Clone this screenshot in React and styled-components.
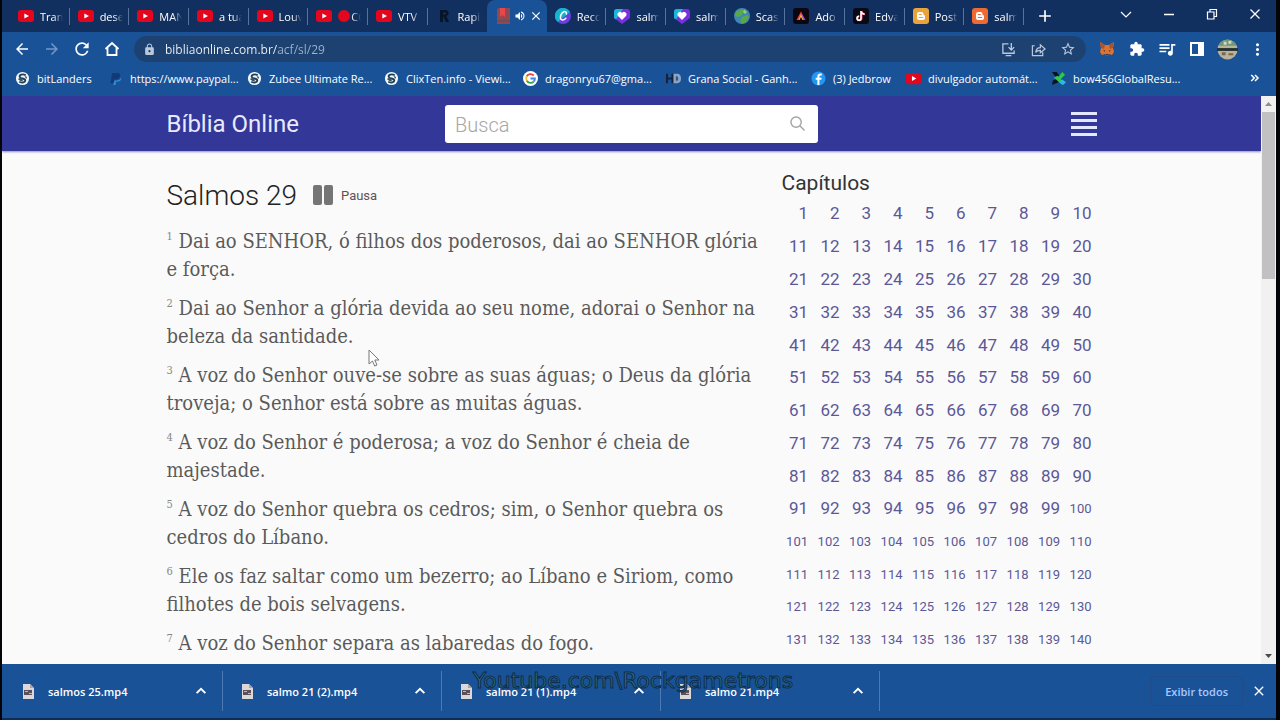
import React from 'react';
import styled, { createGlobalStyle } from 'styled-components';
import {
    MdArrowBack, MdArrowForward, MdRefresh, MdLock, MdStarBorder, MdExtension,
    MdQueueMusic, MdMoreVert, MdVolumeUp, MdClose, MdAdd
} from 'react-icons/md';

const UI_FONT = '"Open Sans", "Noto Sans", sans-serif';
const PAGE_FONT = 'Roboto, "Liberation Sans", sans-serif';

const TABS = [
    { icon: 'youtube', label: 'Trans' },
    { icon: 'youtube', label: 'deser' },
    { icon: 'youtube', label: 'MANH' },
    { icon: 'youtube', label: 'a tua' },
    { icon: 'youtube', label: 'Louvo' },
    { icon: 'youtube', label: 'CO', live: true },
    { icon: 'youtube', label: 'VTV' },
    { icon: 'rapid', label: 'Rapid' },
    { icon: 'bible', active: true },
    { icon: 'canva', label: 'Reco' },
    { icon: 'heart', label: 'salmo' },
    { icon: 'heart', label: 'salmo' },
    { icon: 'globe', label: 'Scas' },
    { icon: 'adobe', label: 'Ado' },
    { icon: 'tiktok', label: 'Edva' },
    { icon: 'bloggerYellow', label: 'Post' },
    { icon: 'blogger', label: 'salmo' },
]

const BOOKMARKS = [
    { icon: 'swirl', label: 'bitLanders' },
    { icon: 'paypal', label: 'https://www.paypal...' },
    { icon: 'swirl', label: 'Zubee Ultimate Re...' },
    { icon: 'swirl', label: 'ClixTen.info - Viewi...' },
    { icon: 'google', label: 'dragonryu67@gma...' },
    { icon: 'hd', label: 'Grana Social - Ganh...' },
    { icon: 'facebook', label: '(3) Jedbrow' },
    { icon: 'youtube', label: 'divulgador automát...' },
    { icon: 'pinwheel', label: 'bow456GlobalResu...' },
]

const VERSES = [
    'Dai ao SENHOR, ó filhos dos poderosos, dai ao SENHOR glória e força.',
    'Dai ao Senhor a glória devida ao seu nome, adorai o Senhor na beleza da santidade.',
    'A voz do Senhor ouve-se sobre as suas águas; o Deus da glória troveja; o Senhor está sobre as muitas águas.',
    'A voz do Senhor é poderosa; a voz do Senhor é cheia de majestade.',
    'A voz do Senhor quebra os cedros; sim, o Senhor quebra os cedros do Líbano.',
    'Ele os faz saltar como um bezerro; ao Líbano e Siriom, como filhotes de bois selvagens.',
    'A voz do Senhor separa as labaredas do fogo.',
]

const DOWNLOADS = ['salmos 25.mp4', 'salmo 21 (2).mp4', 'salmo 21 (1).mp4', 'salmo 21.mp4']

const CHAPTERS = Array.from({ length: 140 }, (_, i) => i + 1)

const GLYPHS = {
    youtube: (
        <>
            <rect x="0" y="2" width="16" height="12" rx="3" fill="#e3061c" />
            <path d="M6.3 5.4v5.2L11 8z" fill="#fff" />
        </>
    ),
    rapid: <path d="M4 14V2h5.5a3 3 0 0 1 .8 5.9L13 14H9.8L7.6 8.6H7V14zM7 4.5v2h2a1 1 0 0 0 0-2z" fill="#081427" />,
    bible: (
        <>
            <path d="M2 2a2 2 0 0 1 2-2h11v16H2z" fill="#8d4a50" />
            <path d="M5 0h5v9L7.5 7 5 9z" fill="#e5484c" />
            <path d="M2 13h13" stroke="#6d4a5c" strokeWidth="1.5" />
        </>
    ),
    canva: (
        <>
            <circle cx="8" cy="8" r="8" fill="#6b3ee0" />
            <path d="M1 12A8 8 0 0 1 9 0a8 8 0 0 1 6 4L3 14z" fill="#12b5cb" />
            <path d="M11.4 6c.3-2-1.2-2.8-2.6-2.2C6.400 4.800 5 8 5.400 10.200c.5 2.700 3.600 2.300 5.400 0" fill="none" stroke="#fff" strokeWidth="1.500" strokeLinecap="round" />
        </>
    ),
    heart: (
        <>
            <path d="M0 4a3 3 0 0 1 3-3h10a3 3 0 0 1 3 3v6l-8 6-8-6z" fill="#7a2fe0" />
            <path d="M0 4a3 3 0 0 1 3-3h6L2 11.500 0 10z" fill="#18b7d6" />
            <path d="M8 12 4 8a2.300 2.300 0 0 1 4-3 2.300 2.300 0 0 1 4 3z" fill="#fff" />
        </>
    ),
    globe: (
        <>
            <circle cx="8" cy="8" r="8" fill="#3f86b8" />
            <path d="M2 3.500 8 1l2 3-3 4-4 1-2-2zM8 9l5-2 2 2-3 5-4 2-2-3z" fill="#59a846" />
            <path d="M10 1.500 13 4l-2 2-2-2z" fill="#9ad06c" />
        </>
    ),
    adobe: (
        <>
            <rect width="16" height="16" rx="3" fill="#0b0710" />
            <path d="M8 3.500 3.500 12H8z" fill="#e8443a" />
            <path d="m8 3.500 4.500 8.500H8z" fill="#b13bd1" />
            <path d="m8 6 2.500 6h-5z" fill="#f4b63b" />
            <path d="m8 9 1.500 3h-3z" fill="#0b0710" />
        </>
    ),
    tiktok: (
        <>
            <rect width="16" height="16" rx="3" fill="#0a0a14" />
            <path d="M8.500 3v7.300a2 2 0 1 1-2-2M8.500 3c.3 1.900 1.500 3 3.500 3.200" fill="none" stroke="#ee4463" strokeWidth="2" />
            <path d="M8 3v7.300a2 2 0 1 1-2-2M8 3c.3 1.900 1.500 3 3.500 3.200" fill="none" stroke="#fff" strokeWidth="1.600" />
        </>
    ),
    bloggerYellow: <BloggerMark color="#e9a33a" />,
    blogger: <BloggerMark color="#ee6a35" />,
    swirl: (
        <>
            <circle cx="8" cy="8" r="7" fill="#f3f7fb" />
            <path d="M11.500 4.500C8 2.500 4.500 4 5 6.300 5.500 8.500 11 7.500 11 10c0 2-3.500 3-6.500 1.500" fill="none" stroke="#1d4058" strokeWidth="2" />
            <path d="M3 8.500 6 7l3 3-3 1zM10 5l3 1.500-1 2z" fill="#35566a" />
        </>
    ),
    paypal: (
        <>
            <path d="M4.500 2H10c2.500 0 3.500 1.500 3 3.500S11 9 8.500 9H6.700l-.9 4H2.500z" fill="#123a78" />
            <path d="M7 10h2.500c2.500 0 4-1.200 4.300-3.500.9 3-1 5-3.800 5H8.700L8 15H5.500z" fill="#2a8fd6" />
        </>
    ),
    google: (
        <>
            <circle cx="8" cy="8" r="8" fill="#fff" />
            <path d="M11.400 4.800A4.700 4.700 0 0 0 4 5.600" fill="none" stroke="#e6443a" strokeWidth="2" />
            <path d="M4 5.600a4.700 4.700 0 0 0 0 4.800" fill="none" stroke="#f5b92c" strokeWidth="2" />
            <path d="M4 10.400a4.700 4.700 0 0 0 7.200 1" fill="none" stroke="#36a455" strokeWidth="2" />
            <path d="M11.200 11.400a4.700 4.700 0 0 0 1.500-3.400H8" fill="none" stroke="#4284f0" strokeWidth="2" />
        </>
    ),
    hd: (
        <>
            <path d="M1 3v10M7 3v10M1 8h6" stroke="#16213c" strokeWidth="2.200" />
            <path d="M8 3h4c2.500 0 4 2 4 5s-1.500 5-4 5H8z" fill="#8ba4c4" />
            <path d="M10.500 5.500v5h1c2 0 2-5 0-5z" fill="#2d568f" />
        </>
    ),
    facebook: (
        <>
            <circle cx="8" cy="8" r="7.500" fill="#2196f3" />
            <path d="M9 15V9.300h2l.4-2.200H9V6c0-.8.300-1.300 1.400-1.300h1.100v-2c-2.900-.5-4.700.3-4.700 3v1.400H5v2.200h1.800V15z" fill="#fff" />
        </>
    ),
    pinwheel: (
        <>
            <path d="M1 1h5l3 4-3 3zM1 15l1-5 5-2 1 4z" fill="#0a1420" />
            <path d="M8 6 12 1l3 3-5 5zM3 7l4-2 7 7-2 3z" fill="#2fc84a" />
            <path d="m9 12 3-3 4 3-3 3z" fill="#31b4f0" />
        </>
    ),
}

function BloggerMark({ color }) {
    return (
        <>
            <rect width="16" height="16" rx="3" fill={color} />
            <path d="M6 4h2.500a2 2 0 0 1 2 2v.5c0 .6.300.8.800.8.500 0 .7.300.7.700V10a2 2 0 0 1-2 2H6a2 2 0 0 1-2-2V6a2 2 0 0 1 2-2z" fill="#fff" />
            <path d="M6.300 6.500h2M6.300 9.500h3.400" stroke={color} strokeWidth="1.200" strokeLinecap="round" />
        </>
    )
}

const Glyph = ({ name, size = 16 }) => (
    <GlyphSvg width={size} height={size} viewBox="0 0 16 16" aria-hidden="true">{GLYPHS[name]}</GlyphSvg>
)

const Line = ({ d, size = 16, width = 1.5 }) => (
    <svg width={size} height={size} viewBox="0 0 16 16" fill="none" stroke="currentColor" strokeWidth={width} aria-hidden="true">
        <path d={d} />
    </svg>
)

const TabStrip = () => (
    <TitleBar>
        <Tabs>
            {TABS.map((tab, i) =>
                <Tab key={i} $active={tab.active} $divider={!tab.active && !TABS[i + 1]?.active}>
                    <Glyph name={tab.icon} />
                    {tab.active ?
                        <>
                            <MdVolumeUp size={12} />
                            <MdClose size={14} />
                        </>
                        :
                        <TabLabel>{tab.live && <LiveDot />}{tab.label}</TabLabel>
                    }
                </Tab>
            )}
        </Tabs>
        <NewTab aria-label="Nova guia"><MdAdd size={20} /></NewTab>
        <WindowButtons>
            <WindowButton aria-label="Pesquisar guias"><Line d="m3 6 5 5 5-5" width={1.2} /></WindowButton>
            <WindowButton aria-label="Minimizar"><Line d="M3 8.500h10" /></WindowButton>
            <WindowButton aria-label="Restaurar"><Line d="M3.500 6h6.500v7H3.500zM6 6V3.500h6.500v7H10" width={1.2} /></WindowButton>
            <WindowButton aria-label="Fechar"><Line d="m3.500 3.500 9 9m0-9-9 9" width={1.3} /></WindowButton>
        </WindowButtons>
    </TitleBar>
)

const Toolbar = () => (
    <ToolbarRow>
        <ToolButton aria-label="Voltar"><MdArrowBack size={18} /></ToolButton>
        <ToolButton aria-label="Avançar" $dim><MdArrowForward size={18} /></ToolButton>
        <ToolButton aria-label="Recarregar"><MdRefresh size={20} /></ToolButton>
        <ToolButton aria-label="Página inicial"><Line d="M1.500 8 8 2l6.500 6M3.500 7v7h9V7" width={1.8} /></ToolButton>
        <AddressBar>
            <MdLock size={13} />
            <AddressInput aria-label="Endereço" defaultValue="bibliaonline.com.br/acf/sl/29" />
            <PillButton aria-label="Instalar"><Line d="M8 2H2v10h12V9M5 14.500h6M11 1v7M8 5.500l3 3 3-3" size={15} width={1.400} /></PillButton>
            <PillButton aria-label="Compartilhar"><Line d="M4 4H1.500v10.500h11V11M5 11c.5-3.500 2.500-5 5-5V3l5 4.500-5 4V9c-2.500 0-4 .5-5 2z" size={15} width={1.300} /></PillButton>
            <PillButton aria-label="Favoritar"><MdStarBorder size={16} /></PillButton>
        </AddressBar>
        <Extensions>
            <ToolButton aria-label="MetaMask">
                <svg width="16" height="16" viewBox="0 0 16 16">
                    <path d="m1 1 5 3h4l5-3-1 6 1 4-2 3-3-1-1 2H7l-1-2-3 1-2-3 1-4z" fill="#dd7330" />
                    <path d="m4 9 2 .5V11zm8 0-2 .5V11zM6.500 13h3v1.500h-3z" fill="#3a3040" />
                    <path d="m1 1 5 3-1 4-3-1zm14 0-5 3 1 4 3-1z" fill="#a9542e" />
                </svg>
            </ToolButton>
            <ToolButton aria-label="Extensões"><MdExtension size={16} /></ToolButton>
            <ToolButton aria-label="Mídia"><MdQueueMusic size={20} /></ToolButton>
            <ToolButton aria-label="Painel lateral">
                <svg width="14" height="14" viewBox="0 0 14 14">
                    <path d="M1 1h12v12H1z" fill="none" stroke="#fff" strokeWidth="2" />
                    <path d="M8 1h5v12H8z" fill="#fff" />
                </svg>
            </ToolButton>
            <ToolButton aria-label="Perfil">
                <svg width="21" height="21" viewBox="0 0 22 22">
                    <circle cx="11" cy="11" r="10.500" fill="#b9b39c" />
                    <path d="M1.500 7a10.500 10.500 0 0 1 19 0z" fill="#6c9a78" />
                    <path d="M7 3h3v3H7zM12 2h3v3h-3z" fill="#d8d8c4" />
                    <path d="M0 9.500h22v3H0z" fill="#25302f" />
                    <path d="M5 14h4v3H5zM12 15h5v2h-5z" fill="#7d6650" />
                </svg>
            </ToolButton>
            <ToolButton aria-label="Menu"><MdMoreVert size={19} /></ToolButton>
        </Extensions>
    </ToolbarRow>
)

const App = () => (
    <>
        <GlobalStyle />
        <BrowserWindow>
            <TabStrip />
            <Toolbar />
            <BookmarkBar>
                {BOOKMARKS.map(item =>
                    <Bookmark key={item.label} href="#">
                        <Glyph name={item.icon} size={15} />
                        {item.label}
                    </Bookmark>
                )}
                <MoreBookmarks aria-label="Mais favoritos">
                    <Line d="m3 4 4 4-4 4m5-8 4 4-4 4" size={12} width={2} />
                </MoreBookmarks>
            </BookmarkBar>

            <Viewport>
                <Page>
                    <SiteHeader>
                        <HeaderInner>
                            <Brand href="#">Bíblia Online</Brand>
                            <SearchBox>
                                <SearchInput type="text" placeholder="Busca" aria-label="Busca" />
                                <svg width="15" height="15" viewBox="0 0 16 16" fill="none" stroke="#a3a3a3" strokeWidth="1.500">
                                    <circle cx="6.500" cy="6.500" r="5.500" />
                                    <path d="m10.500 10.500 5 5" />
                                </svg>
                            </SearchBox>
                            <MenuButton aria-label="Menu"><span /><span /><span /><span /></MenuButton>
                        </HeaderInner>
                    </SiteHeader>
                    <Columns>
                        <article>
                            <TitleRow>
                                <Title>Salmos 29</Title>
                                <PauseButton><PauseBars><i /><i /></PauseBars>Pausa</PauseButton>
                            </TitleRow>
                            <Verses>
                                {VERSES.map((text, i) =>
                                    <Verse key={i}><VerseNumber>{i + 1}</VerseNumber> {text}</Verse>
                                )}
                            </Verses>
                        </article>
                        <nav>
                            <ChaptersTitle>Capítulos</ChaptersTitle>
                            <ChapterGrid>
                                {CHAPTERS.map(n => <Chapter key={n} href="#" $small={n > 99}>{n}</Chapter>)}
                            </ChapterGrid>
                        </nav>
                    </Columns>
                </Page>
                <ScrollBar>
                    <svg width="15" height="16" viewBox="0 0 15 16"><path d="m4 10 3.500-4L11 10z" fill="#8d8d8d" /></svg>
                    <Thumb />
                    <svg width="15" height="16" viewBox="0 0 15 16"><path d="m4 6 3.500 4L11 6z" fill="#4a4a4a" /></svg>
                </ScrollBar>
                <Pointer width="13" height="19" viewBox="0 0 13 19">
                    <path d="M1 1v14l3.500-3 2.200 5 2.300-1-2.200-5H11z" fill="#fff" stroke="#777" />
                </Pointer>
            </Viewport>

            <DownloadBar>
                {DOWNLOADS.map(name =>
                    <Download key={name}>
                        <svg width="12" height="15" viewBox="0 0 12 15">
                            <path d="M1 0h7l4 4v11H1z" fill="#dcd8da" />
                            <path d="M8 0v4h4z" fill="#a9a4ac" />
                            <path d="M2 6h8v5H2z" fill="#5c5058" />
                            <path d="M3 7h3v1H3zM7 9h3v1H7z" fill="#e2b48c" />
                        </svg>
                        <FileName>{name}</FileName>
                        <Line d="m3 10.500 5-5 5 5" size={14} width={2.200} />
                    </Download>
                )}
                <ShowAll>Exibir todos</ShowAll>
                <CloseBar aria-label="Fechar"><MdClose size={16} /></CloseBar>
                <Watermark>Youtube.com\Rockgametrons</Watermark>
            </DownloadBar>
        </BrowserWindow>
    </>
)

export default App;

// CSS //
const GlobalStyle = createGlobalStyle`
* { box-sizing: border-box; }
body {
    margin: 0;
    background: #000;
    font-family: ${UI_FONT};
}
button {
    padding: 0;
    border: 0;
    background: none;
    color: inherit;
    font: inherit;
}
a { text-decoration: none; color: inherit; }
svg { flex: none; }
`

const BrowserWindow = styled.div`
display: flex;
flex-direction: column;
height: 100vh;
overflow: hidden;
border: solid #020408;
border-width: 0 4px 0 2px;
background: #1a5298;
color: #fff;
font-size: 11px;
`

const GlyphSvg = styled.svg`
display: block;
`

const TitleBar = styled.div`
display: flex;
align-items: center;
height: 32px;
flex: none;
padding-left: 8px;
background: #12305f;
`

const Tabs = styled.div`
display: grid;
grid-template-columns: repeat(${TABS.length}, 1fr);
flex: 0 1 1014px;
height: 32px;
`

const Tab = styled.div`
display: flex;
align-items: center;
gap: ${p => p.$active ? 3 : 6}px;
min-width: 0;
padding-left: 8px;
border-radius: ${p => p.$active ? '8px 8px 0 0' : 0};
background: ${p => p.$active ? '#1a5298' : 'linear-gradient(#54749c, #54749c) right 8px / 1px 17px no-repeat'};
${p => !p.$active && !p.$divider && 'background: none;'}
`

const TabLabel = styled.span`
display: flex;
align-items: center;
gap: 1px;
width: 23px;
overflow: hidden;
font-weight: 500;
white-space: nowrap;
mask-image: linear-gradient(90deg, #000 60%, transparent);
`

const LiveDot = styled.i`
flex: none;
width: 12px;
height: 12px;
border-radius: 50%;
background: #e3061c;
`

const NewTab = styled.button`
display: flex;
margin-left: 11px;
`

const WindowButtons = styled.div`
display: flex;
margin-left: auto;
padding-bottom: 5px;
`

const WindowButton = styled.button`
display: flex;
justify-content: center;
width: 43px;
`

const ToolbarRow = styled.div`
display: flex;
align-items: center;
flex: none;
height: 34px;
padding: 0 4px 0 5px;
`

const ToolButton = styled.button`
display: flex;
align-items: center;
justify-content: center;
width: 30px;
height: 28px;
opacity: ${p => p.$dim ? 0.4 : 1};
`

const AddressBar = styled.div`
display: flex;
align-items: center;
flex: 1;
height: 26px;
margin-left: 7px;
padding: 0 3px 0 9px;
border-radius: 13px;
background: #1d4272;
color: #b9c8dc;
`

const AddressInput = styled.input`
flex: 1;
min-width: 0;
padding: 0;
margin-left: 9px;
border: 0;
outline: 0;
background: linear-gradient(90deg, #f2f6fb 112px, #9fb3cd 112px);
background-clip: text;
color: transparent;
font: 500 12px ${UI_FONT};
`

const PillButton = styled.button`
display: flex;
align-items: center;
justify-content: center;
width: 30px;
`

const Extensions = styled.div`
display: flex;
margin-left: 6px;
`

const BookmarkBar = styled.div`
display: grid;
grid-template-columns: 93px 139px 137px 139px 143px 145px 95px 145px 1fr auto;
align-items: center;
flex: none;
height: 30px;
padding: 0 15px 6px 13px;
`

const Bookmark = styled.a`
display: flex;
align-items: center;
gap: 7px;
white-space: nowrap;
`

const MoreBookmarks = styled.button`
display: flex;
`

const Viewport = styled.div`
position: relative;
display: flex;
flex: 1;
min-height: 0;
`

const Page = styled.div`
flex: 1;
min-width: 0;
overflow: hidden;
background: #fafafa;
color: #333;
font-family: ${PAGE_FONT};
`

const SiteHeader = styled.header`
height: 55px;
padding: 0 16px;
background: #323798;
box-shadow: 0 1px 2px #8a8cc0;
`

const HeaderInner = styled.div`
display: grid;
grid-template-columns: 1fr 373px 1fr;
align-items: center;
max-width: 930px;
height: 100%;
margin: 0 auto;
`

const Brand = styled.a`
color: #e8eaff;
font-size: 24px;
`

const SearchBox = styled.label`
display: flex;
align-items: center;
height: 38px;
padding: 0 13px 0 10px;
border-radius: 3px;
background: #fff;
`

const SearchInput = styled.input`
flex: 1;
min-width: 0;
padding: 2px 0 0;
border: 0;
outline: 0;
font: 20px ${PAGE_FONT};

&::placeholder {
    color: #a6a6a6;
    font-weight: 300;
}
`

const MenuButton = styled.button`
display: grid;
justify-self: end;
gap: 4px;
width: 26px;

span {
    height: 3px;
    background: #e4e8ff;
}
`

const Columns = styled.div`
display: grid;
grid-template-columns: minmax(0, 600px) 315px;
justify-content: space-between;
max-width: 962px;
margin: 0 auto;
padding: 18px 16px 0;
`

const TitleRow = styled.div`
display: flex;
align-items: center;
gap: 16px;
height: 52px;
`

const Title = styled.h1`
margin: 0;
color: #222;
font-size: 28px;
font-weight: 300;
`

const PauseButton = styled.button`
display: flex;
align-items: center;
gap: 8px;
color: #5f5254;
font-size: 13px;
`

const PauseBars = styled.span`
display: flex;
gap: 2px;

i {
    width: 9px;
    height: 20px;
    border-radius: 2px;
    background: #757575;
}
`

const Verses = styled.div`
display: grid;
gap: 11px;
padding-top: 6px;
`

const Verse = styled.p`
margin: 0;
color: #5a5a5a;
font-family: "DejaVu Serif Condensed", "DejaVu Serif", serif;
font-size: 20px;
line-height: 28px;
`

const VerseNumber = styled.sup`
color: #888;
font-size: 11px;
line-height: 0;
`

const ChaptersTitle = styled.h2`
margin: 0;
font-size: 21px;
font-weight: 400;
line-height: 28px;
`

const ChapterGrid = styled.div`
display: grid;
grid-template-columns: repeat(10, 1fr);
grid-auto-rows: 1fr;
height: 459px;
`

const Chapter = styled.a`
align-self: center;
padding-right: 5px;
color: #5b5897;
font-size: ${p => p.$small ? 13 : 17}px;
text-align: right;
`

const ScrollBar = styled.div`
display: flex;
flex-direction: column;
width: 15px;
background: #f1f1f1;
`

const Thumb = styled.div`
height: 167px;
margin: 0 1px auto;
background: #c1c1c4;
`

const Pointer = styled.svg`
position: absolute;
top: 253px;
left: 366px;
`

const DownloadBar = styled.div`
position: relative;
display: flex;
align-items: center;
flex: none;
height: 56px;
padding-left: 2px;
border-bottom: 2px solid #0e2c55;
font-weight: 600;
`

const Download = styled.div`
display: flex;
align-items: center;
flex: 0 1 219px;
height: 40px;
padding: 0 14px 0 18px;
border-right: 1px solid #4d7ab5;
`

const FileName = styled.span`
flex: 1;
margin-left: 14px;
white-space: nowrap;
`

const ShowAll = styled.button`
height: 30px;
margin-left: auto;
padding: 0 14px;
border: 1px solid #1f4c8b;
border-radius: 4px;
color: #a9c9ff;
`

const CloseBar = styled.button`
display: flex;
margin: 0 9px 0 8px;
`

const Watermark = styled.div`
position: absolute;
top: 4px;
left: 50%;
transform: translateX(-50%);
margin-left: -6px;
color: #2c6f72;
font-family: "DejaVu Sans", sans-serif;
font-size: 22px;
font-weight: 400;
-webkit-text-stroke: 1px #0d2c50;
`
